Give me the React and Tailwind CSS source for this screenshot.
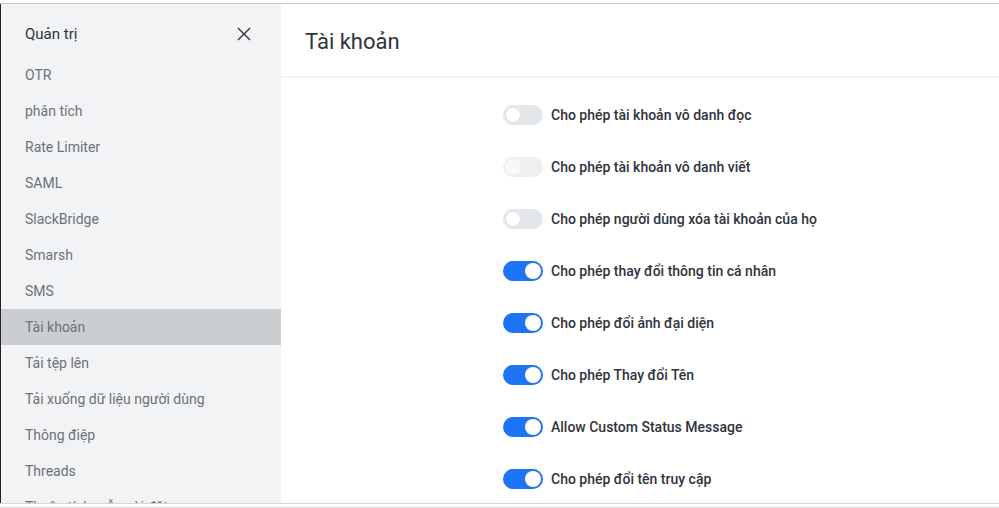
import { useState } from "react";

const MENU = [
  "OTR",
  "phân tích",
  "Rate Limiter",
  "SAML",
  "SlackBridge",
  "Smarsh",
  "SMS",
  "Tài khoản",
  "Tải tệp lên",
  "Tải xuống dữ liệu người dùng",
  "Thông điệp",
  "Threads",
  "Thuộc tính mẫu cài đặt",
];

const SETTINGS = [
  { label: "Cho phép tài khoản vô danh đọc", on: false },
  { label: "Cho phép tài khoản vô danh viết", on: false, disabled: true },
  { label: "Cho phép người dùng xóa tài khoản của họ", on: false },
  { label: "Cho phép thay đổi thông tin cá nhân", on: true },
  { label: "Cho phép đổi ảnh đại diện", on: true },
  { label: "Cho phép Thay đổi Tên", on: true },
  { label: "Allow Custom Status Message", on: true },
  { label: "Cho phép đổi tên truy cập", on: true },
];

function Toggle({ on, disabled }) {
  if (disabled) {
    return (
      <div className="w-10 h-5 rounded-full bg-[#eeeff1] flex items-center px-[2px] shrink-0">
        <div className="w-4 h-4 rounded-full bg-[#f7f8fa]" />
      </div>
    );
  }
  return (
    <div
      className={
        on
          ? "w-10 h-5 rounded-full bg-[#1d74f5] flex items-center justify-end px-[2px] shrink-0"
          : "w-10 h-5 rounded-full bg-[#e4e7ea] flex items-center px-[2px] shrink-0"
      }
    >
      <div
        className={
          on
            ? "w-4 h-4 rounded-full bg-white"
            : "w-4 h-4 rounded-full bg-white border border-[#dfe1e4]"
        }
      />
    </div>
  );
}

export default function App() {
  const [active] = useState("Tài khoản");

  return (
    <div
      className="w-[999px] h-[508px] overflow-hidden bg-white flex flex-col"
      style={{ fontFamily: "Roboto, 'Noto Sans', sans-serif" }}
    >
      <div className="h-[3px] shrink-0" />
      <div className="h-px bg-[#c9c9c9] shrink-0" />
      <div className="flex grow min-h-0 border-l border-[#2c1e2a]">
        {/* Sidebar */}
        <div className="w-[280px] shrink-0 bg-[#f2f3f5] flex flex-col overflow-hidden">
          <div className="h-[53px] shrink-0 flex items-center justify-between pl-6 pr-[30px]">
            <div className="text-[15px] text-[#2f343d] pt-[8px]">Quản trị</div>
            <svg width="14" height="14" viewBox="0 0 14 14" className="mt-[6px]">
              <path d="M1 1 L13 13 M13 1 L1 13" stroke="#2f343d" strokeWidth="1.4" fill="none" />
            </svg>
          </div>
          {MENU.map((item) => (
            <div
              key={item}
              className={
                item === active
                  ? "h-9 shrink-0 flex items-center pl-6 text-sm text-[#6c727a] bg-[#cbced1]"
                  : "h-9 shrink-0 flex items-center pl-6 text-sm text-[#6c727a]"
              }
            >
              {item}
            </div>
          ))}
        </div>

        {/* Main */}
        <div className="grow flex flex-col min-w-0">
          <div className="h-[74px] shrink-0 flex items-center pl-6 border-b-2 border-[#f2f3f5]">
            <h1 className="text-[22px] text-[#2f343d] pt-[2px]">Tài khoản</h1>
          </div>
          <div className="flex flex-col pl-[222px] pt-[11px]">
            {SETTINGS.map((s) => (
              <div key={s.label} className="h-[52px] flex items-center gap-2">
                <Toggle on={s.on} disabled={s.disabled} />
                <span className="text-sm font-medium text-[#2f343d]">{s.label}</span>
              </div>
            ))}
          </div>
        </div>
      </div>
      <div className="h-[5px] shrink-0 border-t border-b border-[#d5d5d5]" />
    </div>
  );
}
